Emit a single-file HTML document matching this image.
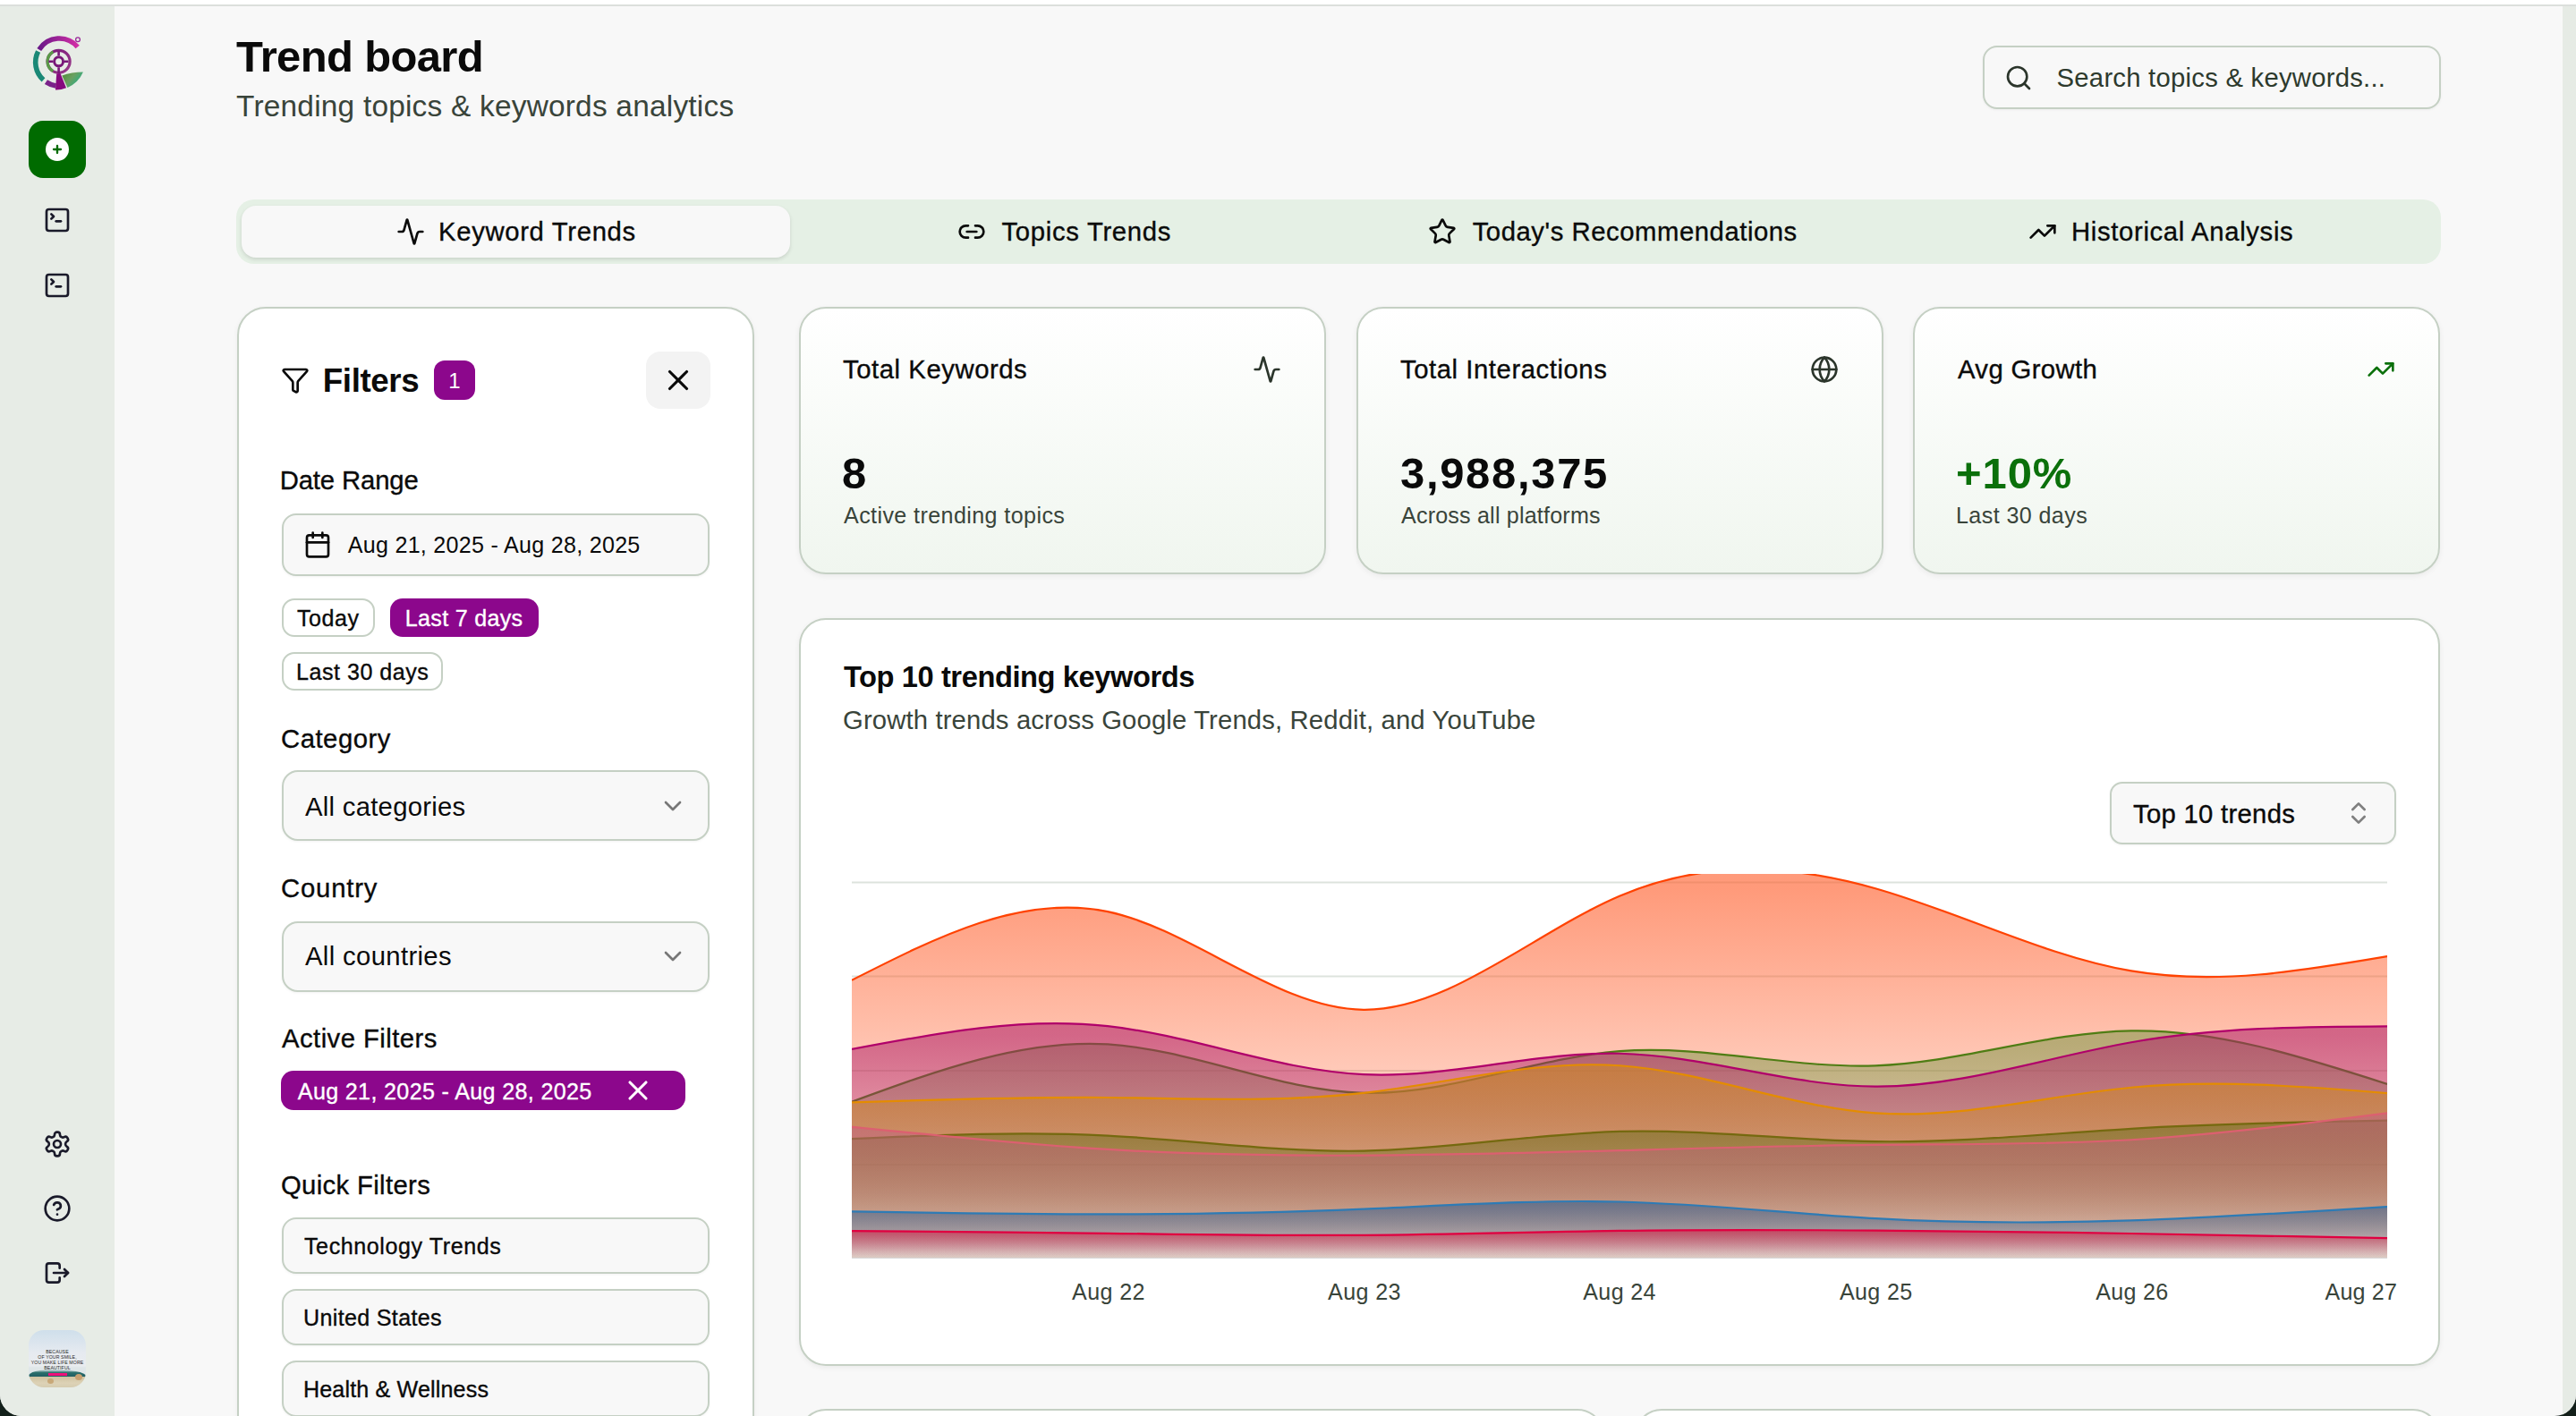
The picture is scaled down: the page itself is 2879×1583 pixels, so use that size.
<!DOCTYPE html>
<html><head><meta charset="utf-8">
<style>
*{box-sizing:border-box;margin:0;padding:0}
html,body{width:2879px;height:1583px;overflow:hidden;background:#13201a;font-family:"Liberation Sans",sans-serif;color:#0a0a0a;position:relative}
.abs{position:absolute}
.t{position:absolute;white-space:nowrap;line-height:1}
svg{position:absolute;overflow:visible}
.ic{fill:none;stroke:currentColor;stroke-linecap:round;stroke-linejoin:round}
#top{position:absolute;left:0;top:0;width:2879px;height:5px;background:#fff}
#topline{position:absolute;left:0;top:5px;width:2879px;height:2px;background:#dcdfdc}
#app{position:absolute;left:0;top:7px;width:2879px;height:1576px;background:#f8f8f8;border-radius:0 0 24px 24px;overflow:hidden}
#side{position:absolute;left:0;top:0;width:128px;height:1576px;background:#e7ece6}
#rstrip{position:absolute;left:2864px;top:0;width:15px;height:1576px;background:#e6ebe5}
</style></head><body>
<div id="top"></div><div id="topline"></div>
<div id="app"><div id="side"></div><div id="rstrip"></div></div>
<svg style="left:30px;top:35px" width="70" height="73" viewBox="30 35 70 73">
<defs>
<linearGradient id="lg1" x1="0" y1="0" x2="1" y2="0"><stop offset="0" stop-color="#6a1888"/><stop offset="1" stop-color="#d22ea6"/></linearGradient>
<linearGradient id="lg2" x1="0" y1="0" x2="1" y2="0.6"><stop offset="0" stop-color="#4e8a34"/><stop offset="0.5" stop-color="#6aa060"/><stop offset="1" stop-color="#22b08a"/></linearGradient>
<linearGradient id="lg3" x1="0" y1="0" x2="1" y2="1"><stop offset="0" stop-color="#781878"/><stop offset="1" stop-color="#9a3a8a"/></linearGradient>
</defs>
<path d="M86.68,52.50A26.6,26.6 0 0 0 43.74,55.50" fill="none" stroke="url(#lg1)" stroke-width="5.6"/>
<path d="M42.60,57.52A26.6,26.6 0 0 0 48.50,89.37" fill="none" stroke="#1a8876" stroke-width="5.6"/>
<path d="M51.43,91.65A26.6,26.6 0 0 0 62.60,95.94" fill="none" stroke="#7a228a" stroke-width="5.6"/>
<circle cx="87" cy="44.3" r="2.4" fill="none" stroke="#9a2a9a" stroke-width="1.3"/>
<circle cx="65.6" cy="68.8" r="12.5" fill="none" stroke="url(#lg3)" stroke-width="3.2"/>
<path d="M59.35,57.97A12.5,12.5 0 0 0 59.35,79.63" fill="none" stroke="#5a9a48" stroke-width="3.2"/>
<circle cx="65.6" cy="68.8" r="5" fill="none" stroke="#781878" stroke-width="3"/>
<path d="M65.6,57.5V62.3M65.6,75.3V82M54.5,68.8H59.3M71.9,68.8H76.5" stroke="#781878" stroke-width="2.6"/>
<path d="M63.2,82.5L67.5,82L74,98.2Q68,100.8 62,100.6Z" fill="#860a7e"/>
<path d="M69.3,84.6Q80,80.4 92.9,80.4Q88,92 75.4,98Z" fill="url(#lg2)"/>
</svg>
<div class="abs" style="left:32px;top:135px;width:64px;height:64px;border-radius:16px;background:#006b00"></div>
<div class="abs" style="left:51px;top:154px;width:26px;height:26px;border-radius:50%;background:#fff"></div>
<svg class="ic" style="left:56px;top:159px;color:#006b00;" width="16" height="16" viewBox="0 0 24 24" stroke-width="3.5"><path d="M12 6v12M6 12h12"/></svg>
<svg class="ic" style="left:48px;top:230px;color:#1a1a2a;" width="32" height="32" viewBox="0 0 24 24" stroke-width="2"><path d="m7 11 2-2-2-2"/><path d="M11 13h4"/><rect width="18" height="18" x="3" y="3" rx="2" ry="2"/></svg>
<svg class="ic" style="left:48px;top:303px;color:#1a1a2a;" width="32" height="32" viewBox="0 0 24 24" stroke-width="2"><path d="m7 11 2-2-2-2"/><path d="M11 13h4"/><rect width="18" height="18" x="3" y="3" rx="2" ry="2"/></svg>
<svg class="ic" style="left:48px;top:1263px;color:#1a1a2a;" width="32" height="32" viewBox="0 0 24 24" stroke-width="2"><path d="M12.22 2h-.44a2 2 0 0 0-2 2v.18a2 2 0 0 1-1 1.73l-.43.25a2 2 0 0 1-2 0l-.15-.08a2 2 0 0 0-2.73.73l-.22.38a2 2 0 0 0 .73 2.73l.15.1a2 2 0 0 1 1 1.72v.51a2 2 0 0 1-1 1.74l-.15.09a2 2 0 0 0-.73 2.73l.22.38a2 2 0 0 0 2.73.73l.15-.08a2 2 0 0 1 2 0l.43.25a2 2 0 0 1 1 1.73V20a2 2 0 0 0 2 2h.44a2 2 0 0 0 2-2v-.18a2 2 0 0 1 1-1.73l.43-.25a2 2 0 0 1 2 0l.15.08a2 2 0 0 0 2.73-.73l.22-.39a2 2 0 0 0-.73-2.73l-.15-.08a2 2 0 0 1-1-1.74v-.5a2 2 0 0 1 1-1.74l.15-.09a2 2 0 0 0 .73-2.73l-.22-.38a2 2 0 0 0-2.73-.73l-.15.08a2 2 0 0 1-2 0l-.43-.25a2 2 0 0 1-1-1.73V4a2 2 0 0 0-2-2z"/><circle cx="12" cy="12" r="3"/></svg>
<svg class="ic" style="left:48px;top:1335px;color:#1a1a2a;" width="32" height="32" viewBox="0 0 24 24" stroke-width="2"><circle cx="12" cy="12" r="10"/><path d="M9.09 9a3 3 0 0 1 5.83 1c0 2-3 3-3 3"/><path d="M12 17h.01"/></svg>
<svg class="ic" style="left:48px;top:1407px;color:#1a1a2a;" width="32" height="32" viewBox="0 0 24 24" stroke-width="2"><path d="M14 8v-2a2 2 0 0 0-2-2h-7a2 2 0 0 0-2 2v12a2 2 0 0 0 2 2h7a2 2 0 0 0 2-2v-2"/><path d="M9 12h12l-3-3"/><path d="M18 15l3-3"/></svg>
<div class="abs" style="left:32px;top:1487px;width:64px;height:64px;border-radius:17px;overflow:hidden;background:linear-gradient(180deg,#cfdfeb 0%,#e6eaf0 40%,#e9ecef 62%,#dfe6e8 66%)"><div class="t" style="left:0;width:64px;top:20.5px;font-size:5.2px;line-height:6px;text-align:center;color:#2a2a2a;letter-spacing:0.1px;white-space:normal">BECAUSE<br>OF YOUR SMILE,<br>YOU MAKE LIFE MORE<br>BEAUTIFUL</div><div class="abs" style="left:0;top:44px;width:64px;height:9px;background:linear-gradient(180deg,rgba(40,110,110,0) 0%,#2a6e6a 40%,#1f5a62 100%);border-radius:40% 60% 0 0/80% 80% 0 0"></div><div class="abs" style="left:0;top:52px;width:64px;height:12px;background:linear-gradient(180deg,#cfc2a0 0%,#ddd2b6 60%,#d6ccb0 100%)"></div><div class="abs" style="left:21px;top:54px;width:7px;height:6px;border-radius:50%;background:#c8a878"></div><div class="abs" style="left:52px;top:49px;width:8px;height:7px;border-radius:50%;background:#c8a070"></div><div class="abs" style="left:22px;top:47.5px;width:21px;height:3.5px;background:#f0107a"></div></div>
<div class="abs" style="left:2216px;top:51px;width:512px;height:71px;border:2px solid #c5d0c4;border-radius:16px;background:#f8f8f8;box-shadow:0 1px 3px rgba(0,0,0,.05)"></div>
<svg class="ic" style="left:2240px;top:71px;color:#2b352b;" width="32" height="32" viewBox="0 0 24 24" stroke-width="2"><circle cx="11" cy="11" r="8"/><path d="m21 21-4.3-4.3"/></svg>
<div class="abs" style="left:264px;top:223px;width:2464px;height:72px;border-radius:20px;background:#e5f0e5"></div>
<div class="abs" style="left:270px;top:230px;width:613px;height:58px;border-radius:16px;background:#f8f8f8;box-shadow:0 2px 4px rgba(0,0,0,.12)"></div>
<svg class="ic" style="left:443px;top:243px;color:#0a0a0a;" width="32" height="32" viewBox="0 0 24 24" stroke-width="2"><path d="M22 12h-2.48a2 2 0 0 0-1.93 1.46l-2.35 8.36a.25.25 0 0 1-.48 0L9.24 2.18a.25.25 0 0 0-.48 0l-2.35 8.36A2 2 0 0 1 4.49 12H2"/></svg>
<svg class="ic" style="left:1070px;top:243px;color:#0a0a0a;" width="32" height="32" viewBox="0 0 24 24" stroke-width="2"><path d="M9 17H7A5 5 0 0 1 7 7h2"/><path d="M15 7h2a5 5 0 1 1 0 10h-2"/><line x1="8" x2="16" y1="12" y2="12"/></svg>
<svg class="ic" style="left:1596px;top:243px;color:#0a0a0a;" width="32" height="32" viewBox="0 0 24 24" stroke-width="2"><path d="M11.525 2.295a.53.53 0 0 1 .95 0l2.31 4.679a2.123 2.123 0 0 0 1.595 1.16l5.166.756a.53.53 0 0 1 .294.904l-3.736 3.638a2.123 2.123 0 0 0-.611 1.878l.882 5.14a.53.53 0 0 1-.771.56l-4.618-2.428a2.122 2.122 0 0 0-1.973 0L6.396 21.01a.53.53 0 0 1-.77-.56l.881-5.139a2.122 2.122 0 0 0-.611-1.879L2.16 9.795a.53.53 0 0 1 .294-.906l5.165-.755a2.122 2.122 0 0 0 1.597-1.16z"/></svg>
<svg class="ic" style="left:2267px;top:243px;color:#0a0a0a;" width="32" height="32" viewBox="0 0 24 24" stroke-width="2"><polyline points="22 7 13.5 15.5 8.5 10.5 2 17"/><polyline points="16 7 22 7 22 13"/></svg>
<div class="abs" style="left:265px;top:343px;width:578px;height:1300px;background:#fff;border:2px solid #c5d0c4;border-radius:32px;box-shadow:0 2px 6px rgba(0,0,0,.05)"></div>
<svg class="ic" style="left:314px;top:409px;color:#0a0a0a;" width="32" height="32" viewBox="0 0 24 24" stroke-width="2"><path d="M10 20a1 1 0 0 0 .553.895l2 1A1 1 0 0 0 14 21v-7a2 2 0 0 1 .517-1.341L21.74 4.67A1 1 0 0 0 21 3H3a1 1 0 0 0-.742 1.67l7.225 7.989A2 2 0 0 1 10 14z"/></svg>
<div class="abs" style="left:485px;top:403px;width:46px;height:44px;border-radius:12px;background:#8c078c"></div>
<div class="t" style="left:508px;top:413.68px;font-size:24px;font-weight:400;color:#fff;letter-spacing:0px;transform:translateX(-50%);">1</div>
<div class="abs" style="left:722px;top:393px;width:72px;height:64px;border-radius:16px;background:#f3f3f3"></div>
<svg class="ic" style="left:738.8px;top:405.5px;color:#0a0a0a;" width="38" height="38" viewBox="0 0 24 24" stroke-width="2"><path d="M18 6 6 18"/><path d="m6 6 12 12"/></svg>
<div class="abs" style="left:315px;top:574px;width:478px;height:70px;border:2px solid #c5d0c4;border-radius:16px;background:#f8f8f8;box-shadow:0 1px 3px rgba(0,0,0,.05)"></div>
<svg class="ic" style="left:339px;top:593px;color:#0a0a0a;" width="32" height="32" viewBox="0 0 24 24" stroke-width="2"><path d="M8 2v4"/><path d="M16 2v4"/><rect width="18" height="18" x="3" y="4" rx="2"/><path d="M3 10h18"/></svg>
<div class="abs" style="left:315px;top:669px;width:104px;height:43px;border:2px solid #c5d0c4;border-radius:14px;background:#fff"></div>
<div class="abs" style="left:436px;top:669px;width:166px;height:43px;border-radius:14px;background:#8c078c"></div>
<div class="abs" style="left:315px;top:729px;width:180px;height:43px;border:2px solid #c5d0c4;border-radius:14px;background:#fff"></div>
<div class="abs" style="left:315px;top:861px;width:478px;height:79px;border:2px solid #c5d0c4;border-radius:18px;background:#f8f8f8;box-shadow:0 1px 3px rgba(0,0,0,.05)"></div>
<svg class="ic" style="left:736px;top:885px;color:#777;" width="32" height="32" viewBox="0 0 24 24" stroke-width="2"><path d="m6 9 6 6 6-6"/></svg>
<div class="abs" style="left:315px;top:1030px;width:478px;height:79px;border:2px solid #c5d0c4;border-radius:18px;background:#f8f8f8;box-shadow:0 1px 3px rgba(0,0,0,.05)"></div>
<svg class="ic" style="left:736px;top:1053px;color:#777;" width="32" height="32" viewBox="0 0 24 24" stroke-width="2"><path d="m6 9 6 6 6-6"/></svg>
<div class="abs" style="left:314px;top:1197px;width:452px;height:44px;border-radius:14px;background:#8c078c"></div>
<svg class="ic" style="left:695.3px;top:1200.8px;color:#fff;" width="36" height="36" viewBox="0 0 24 24" stroke-width="2.1"><path d="M18 6 6 18"/><path d="m6 6 12 12"/></svg>
<div class="abs" style="left:315px;top:1361px;width:478px;height:63px;border:2px solid #c5d0c4;border-radius:16px;background:#f8f8f8;box-shadow:0 1px 3px rgba(0,0,0,.05)"></div>
<div class="abs" style="left:315px;top:1441px;width:478px;height:63px;border:2px solid #c5d0c4;border-radius:16px;background:#f8f8f8;box-shadow:0 1px 3px rgba(0,0,0,.05)"></div>
<div class="abs" style="left:315px;top:1521px;width:478px;height:63px;border:2px solid #c5d0c4;border-radius:16px;background:#f8f8f8;box-shadow:0 1px 3px rgba(0,0,0,.05)"></div>
<div class="abs" style="left:893px;top:343px;width:589px;height:299px;border:2px solid #c5d0c4;border-radius:30px;background:linear-gradient(180deg,#ffffff 0%,#f0f6ef 100%);box-shadow:0 2px 6px rgba(0,0,0,.06)"></div>
<svg class="ic" style="left:1400px;top:397px;color:#2b352b;" width="32" height="32" viewBox="0 0 24 24" stroke-width="2"><path d="M22 12h-2.48a2 2 0 0 0-1.93 1.46l-2.35 8.36a.25.25 0 0 1-.48 0L9.24 2.18a.25.25 0 0 0-.48 0l-2.35 8.36A2 2 0 0 1 4.49 12H2"/></svg>
<div class="abs" style="left:1516px;top:343px;width:589px;height:299px;border:2px solid #c5d0c4;border-radius:30px;background:linear-gradient(180deg,#ffffff 0%,#f0f6ef 100%);box-shadow:0 2px 6px rgba(0,0,0,.06)"></div>
<svg class="ic" style="left:2023px;top:397px;color:#2b352b;" width="32" height="32" viewBox="0 0 24 24" stroke-width="2"><circle cx="12" cy="12" r="10"/><path d="M12 2a14.5 14.5 0 0 0 0 20 14.5 14.5 0 0 0 0-20"/><path d="M2 12h20"/></svg>
<div class="abs" style="left:2138px;top:343px;width:589px;height:299px;border:2px solid #c5d0c4;border-radius:30px;background:linear-gradient(180deg,#ffffff 0%,#f0f6ef 100%);box-shadow:0 2px 6px rgba(0,0,0,.06)"></div>
<svg class="ic" style="left:2645px;top:397px;color:#0b700b;" width="32" height="32" viewBox="0 0 24 24" stroke-width="2"><polyline points="22 7 13.5 15.5 8.5 10.5 2 17"/><polyline points="16 7 22 7 22 13"/></svg>
<div class="abs" style="left:893px;top:691px;width:1834px;height:836px;border:2px solid #c5d0c4;border-radius:30px;background:#fff;box-shadow:0 2px 6px rgba(0,0,0,.06)"></div>
<div class="abs" style="left:2358px;top:873.5px;width:320px;height:70.5px;border:2px solid #c5d0c4;border-radius:14px;background:#f8f8f8;box-shadow:0 1px 3px rgba(0,0,0,.05)"></div>
<svg class="ic" style="left:2620px;top:893px;color:#7f7f7f;" width="32" height="32" viewBox="0 0 24 24" stroke-width="2"><path d="m7 15 5 5 5-5"/><path d="m7 9 5-5 5 5"/></svg>
<svg style="left:0;top:0;position:absolute" width="2879" height="1583" viewBox="0 0 2879 1583">
<defs><clipPath id="cc"><rect x="952" y="977" width="1716" height="430"/></clipPath>
<linearGradient id="g0" x1="0" y1="0" x2="0" y2="1"><stop offset="0.05" stop-color="#ff5722" stop-opacity="0.6"/><stop offset="0.95" stop-color="#ff5722" stop-opacity="0.06"/></linearGradient>
<linearGradient id="g1" x1="0" y1="0" x2="0" y2="1"><stop offset="0.05" stop-color="#80984a" stop-opacity="0.56"/><stop offset="0.95" stop-color="#80984a" stop-opacity="0.06"/></linearGradient>
<linearGradient id="g2" x1="0" y1="0" x2="0" y2="1"><stop offset="0.05" stop-color="#b0206a" stop-opacity="0.56"/><stop offset="0.95" stop-color="#b0206a" stop-opacity="0.06"/></linearGradient>
<linearGradient id="g3" x1="0" y1="0" x2="0" y2="1"><stop offset="0.05" stop-color="#d08a20" stop-opacity="0.56"/><stop offset="0.95" stop-color="#d08a20" stop-opacity="0.06"/></linearGradient>
<linearGradient id="g4" x1="0" y1="0" x2="0" y2="1"><stop offset="0.05" stop-color="#6f7020" stop-opacity="0.56"/><stop offset="0.95" stop-color="#6f7020" stop-opacity="0.06"/></linearGradient>
<linearGradient id="g5" x1="0" y1="0" x2="0" y2="1"><stop offset="0.05" stop-color="#c06080" stop-opacity="0.56"/><stop offset="0.95" stop-color="#c06080" stop-opacity="0.06"/></linearGradient>
<linearGradient id="g6" x1="0" y1="0" x2="0" y2="1"><stop offset="0.05" stop-color="#2a5a90" stop-opacity="0.56"/><stop offset="0.95" stop-color="#2a5a90" stop-opacity="0.06"/></linearGradient>
<linearGradient id="g7" x1="0" y1="0" x2="0" y2="1"><stop offset="0.05" stop-color="#dc143c" stop-opacity="0.56"/><stop offset="0.95" stop-color="#dc143c" stop-opacity="0.0"/></linearGradient>
</defs>
<line x1="952" x2="2668" y1="986.5" y2="986.5" stroke="#dde3dd" stroke-width="2"/>
<line x1="952" x2="2668" y1="1091.5" y2="1091.5" stroke="#dde3dd" stroke-width="2"/>
<line x1="952" x2="2668" y1="1197" y2="1197" stroke="#dde3dd" stroke-width="2"/>
<line x1="952" x2="2668" y1="1302" y2="1302" stroke="#dde3dd" stroke-width="2"/>
<g clip-path="url(#cc)">
<path d="M952.0,1095.82C1047.33,1047.39 1142.67,998.96 1238.00,1019.10C1333.33,1039.24 1428.67,1127.96 1524.00,1128.81C1619.33,1129.66 1714.67,1042.64 1810.00,1001.76C1905.33,960.88 2000.67,966.15 2096.00,993.22C2191.33,1020.29 2286.67,1069.15 2382.00,1085.43C2477.33,1101.71 2572.67,1085.39 2668.00,1069.08L2668,1407L952,1407Z" fill="url(#g0)"/>
<path d="M952.0,1095.82C1047.33,1047.39 1142.67,998.96 1238.00,1019.10C1333.33,1039.24 1428.67,1127.96 1524.00,1128.81C1619.33,1129.66 1714.67,1042.64 1810.00,1001.76C1905.33,960.88 2000.67,966.15 2096.00,993.22C2191.33,1020.29 2286.67,1069.15 2382.00,1085.43C2477.33,1101.71 2572.67,1085.39 2668.00,1069.08" fill="none" stroke="#ff4200" stroke-width="2.2"/>
<path d="M952.0,1231.69C1047.33,1196.72 1142.67,1161.75 1238.00,1167.45C1333.33,1173.15 1428.67,1219.52 1524.00,1221.87C1619.33,1224.22 1714.67,1182.55 1810.00,1175.18C1905.33,1167.81 2000.67,1194.73 2096.00,1191.28C2191.33,1187.83 2286.67,1154.00 2382.00,1152.36C2477.33,1150.72 2572.67,1181.28 2668.00,1211.84L2668,1407L952,1407Z" fill="url(#g1)"/>
<path d="M952.0,1231.69C1047.33,1196.72 1142.67,1161.75 1238.00,1167.45C1333.33,1173.15 1428.67,1219.52 1524.00,1221.87C1619.33,1224.22 1714.67,1182.55 1810.00,1175.18C1905.33,1167.81 2000.67,1194.73 2096.00,1191.28C2191.33,1187.83 2286.67,1154.00 2382.00,1152.36C2477.33,1150.72 2572.67,1181.28 2668.00,1211.84" fill="none" stroke="#4f7d14" stroke-width="2.2"/>
<path d="M952.0,1172.99C1047.33,1154.86 1142.67,1136.73 1238.00,1147.17C1333.33,1157.61 1428.67,1196.62 1524.00,1201.13C1619.33,1205.64 1714.67,1175.64 1810.00,1177.77C1905.33,1179.90 2000.67,1214.14 2096.00,1214.69C2191.33,1215.24 2286.67,1182.09 2382.00,1165.26C2477.33,1148.43 2572.67,1147.91 2668.00,1147.39L2668,1407L952,1407Z" fill="url(#g2)"/>
<path d="M952.0,1172.99C1047.33,1154.86 1142.67,1136.73 1238.00,1147.17C1333.33,1157.61 1428.67,1196.62 1524.00,1201.13C1619.33,1205.64 1714.67,1175.64 1810.00,1177.77C1905.33,1179.90 2000.67,1214.14 2096.00,1214.69C2191.33,1215.24 2286.67,1182.09 2382.00,1165.26C2477.33,1148.43 2572.67,1147.91 2668.00,1147.39" fill="none" stroke="#b0006a" stroke-width="2.2"/>
<path d="M952.0,1232.37C1047.33,1229.25 1142.67,1226.13 1238.00,1226.98C1333.33,1227.83 1428.67,1232.64 1524.00,1221.84C1619.33,1211.04 1714.67,1184.62 1810.00,1191.26C1905.33,1197.90 2000.67,1237.62 2096.00,1244.38C2191.33,1251.14 2286.67,1224.96 2382.00,1215.77C2477.33,1206.58 2572.67,1214.38 2668.00,1222.18L2668,1407L952,1407Z" fill="url(#g3)"/>
<path d="M952.0,1232.37C1047.33,1229.25 1142.67,1226.13 1238.00,1226.98C1333.33,1227.83 1428.67,1232.64 1524.00,1221.84C1619.33,1211.04 1714.67,1184.62 1810.00,1191.26C1905.33,1197.90 2000.67,1237.62 2096.00,1244.38C2191.33,1251.14 2286.67,1224.96 2382.00,1215.77C2477.33,1206.58 2572.67,1214.38 2668.00,1222.18" fill="none" stroke="#e48c00" stroke-width="2.2"/>
<path d="M952.0,1273.14C1047.33,1268.91 1142.67,1264.69 1238.00,1269.55C1333.33,1274.41 1428.67,1288.36 1524.00,1286.62C1619.33,1284.88 1714.67,1267.46 1810.00,1264.95C1905.33,1262.44 2000.67,1274.84 2096.00,1276.12C2191.33,1277.40 2286.67,1267.57 2382.00,1261.80C2477.33,1256.03 2572.67,1254.33 2668.00,1252.63L2668,1407L952,1407Z" fill="url(#g4)"/>
<path d="M952.0,1273.14C1047.33,1268.91 1142.67,1264.69 1238.00,1269.55C1333.33,1274.41 1428.67,1288.36 1524.00,1286.62C1619.33,1284.88 1714.67,1267.46 1810.00,1264.95C1905.33,1262.44 2000.67,1274.84 2096.00,1276.12C2191.33,1277.40 2286.67,1267.57 2382.00,1261.80C2477.33,1256.03 2572.67,1254.33 2668.00,1252.63" fill="none" stroke="#75690f" stroke-width="2.2"/>
<path d="M952.0,1259.75C1047.33,1269.53 1142.67,1279.32 1238.00,1284.97C1333.33,1290.62 1428.67,1292.15 1524.00,1291.69C1619.33,1291.23 1714.67,1288.78 1810.00,1286.17C1905.33,1283.56 2000.67,1280.80 2096.00,1279.88C2191.33,1278.96 2286.67,1279.87 2382.00,1274.24C2477.33,1268.61 2572.67,1256.45 2668.00,1244.29L2668,1407L952,1407Z" fill="url(#g5)"/>
<path d="M952.0,1259.75C1047.33,1269.53 1142.67,1279.32 1238.00,1284.97C1333.33,1290.62 1428.67,1292.15 1524.00,1291.69C1619.33,1291.23 1714.67,1288.78 1810.00,1286.17C1905.33,1283.56 2000.67,1280.80 2096.00,1279.88C2191.33,1278.96 2286.67,1279.87 2382.00,1274.24C2477.33,1268.61 2572.67,1256.45 2668.00,1244.29" fill="none" stroke="#dc6070" stroke-width="2.2"/>
<path d="M952.0,1354.42C1047.33,1355.98 1142.67,1357.54 1238.00,1357.47C1333.33,1357.40 1428.67,1355.71 1524.00,1351.66C1619.33,1347.61 1714.67,1341.21 1810.00,1343.49C1905.33,1345.77 2000.67,1356.75 2096.00,1362.19C2191.33,1367.63 2286.67,1367.53 2382.00,1364.41C2477.33,1361.29 2572.67,1355.13 2668.00,1348.98L2668,1407L952,1407Z" fill="url(#g6)"/>
<path d="M952.0,1354.42C1047.33,1355.98 1142.67,1357.54 1238.00,1357.47C1333.33,1357.40 1428.67,1355.71 1524.00,1351.66C1619.33,1347.61 1714.67,1341.21 1810.00,1343.49C1905.33,1345.77 2000.67,1356.75 2096.00,1362.19C2191.33,1367.63 2286.67,1367.53 2382.00,1364.41C2477.33,1361.29 2572.67,1355.13 2668.00,1348.98" fill="none" stroke="#2e7bb5" stroke-width="2.2"/>
<path d="M952.0,1376.10C1047.33,1376.87 1142.67,1377.64 1238.00,1378.80C1333.33,1379.96 1428.67,1381.52 1524.00,1380.83C1619.33,1380.14 1714.67,1377.19 1810.00,1375.88C1905.33,1374.57 2000.67,1374.90 2096.00,1375.63C2191.33,1376.36 2286.67,1377.49 2382.00,1378.98C2477.33,1380.47 2572.67,1382.32 2668.00,1384.17L2668,1407L952,1407Z" fill="url(#g7)"/>
<path d="M952.0,1376.10C1047.33,1376.87 1142.67,1377.64 1238.00,1378.80C1333.33,1379.96 1428.67,1381.52 1524.00,1380.83C1619.33,1380.14 1714.67,1377.19 1810.00,1375.88C1905.33,1374.57 2000.67,1374.90 2096.00,1375.63C2191.33,1376.36 2286.67,1377.49 2382.00,1378.98C2477.33,1380.47 2572.67,1382.32 2668.00,1384.17" fill="none" stroke="#e00040" stroke-width="2.2"/>
</g>
<line x1="952" x2="2668" y1="1406.5" y2="1406.5" stroke="#d8d8d8" stroke-width="1"/>
</svg>
<div class="abs" style="left:893px;top:1575px;width:900px;height:200px;border:2px solid #c5d0c4;border-radius:30px;background:#fff"></div>
<div class="abs" style="left:1827px;top:1575px;width:900px;height:200px;border:2px solid #c5d0c4;border-radius:30px;background:#fff"></div>
<div class="t" style="left:264.1px;top:39.23px;font-size:48.96px;font-weight:700;color:#0a0a0a;letter-spacing:-0.64px;">Trend board</div>
<div class="t" style="left:264px;top:102.04px;font-size:33.44px;font-weight:400;color:#39443a;letter-spacing:0.214px;">Trending topics &amp; keywords analytics</div>
<div class="t" style="left:2298.6px;top:72.88px;font-size:29.26px;font-weight:400;color:#2d3a2d;letter-spacing:0.246px;">Search topics &amp; keywords...</div>
<div class="t" style="left:490px;top:245.08px;font-size:29.26px;font-weight:500;color:#0a0a0a;letter-spacing:0.677px;-webkit-text-stroke:0.35px #0a0a0a;">Keyword Trends</div>
<div class="t" style="left:1119.4px;top:245.08px;font-size:29.26px;font-weight:500;color:#0a0a0a;letter-spacing:0.717px;-webkit-text-stroke:0.35px #0a0a0a;">Topics Trends</div>
<div class="t" style="left:1645.7px;top:245.08px;font-size:29.26px;font-weight:500;color:#0a0a0a;letter-spacing:0.559px;-webkit-text-stroke:0.35px #0a0a0a;">Today&#x27;s Recommendations</div>
<div class="t" style="left:2315px;top:245.08px;font-size:29.26px;font-weight:500;color:#0a0a0a;letter-spacing:0.667px;-webkit-text-stroke:0.35px #0a0a0a;">Historical Analysis</div>
<div class="t" style="left:360.8px;top:408.27px;font-size:36.72px;font-weight:700;color:#0a0a0a;letter-spacing:-0.4px;">Filters</div>
<div class="t" style="left:312.7px;top:523.48px;font-size:29.26px;font-weight:500;color:#0a0a0a;letter-spacing:-0.111px;-webkit-text-stroke:0.35px #0a0a0a;">Date Range</div>
<div class="t" style="left:388.7px;top:596.61px;font-size:25.08px;font-weight:400;color:#0a0a0a;letter-spacing:0.281px;">Aug 21, 2025 - Aug 28, 2025</div>
<div class="t" style="left:332px;top:678.61px;font-size:25.08px;font-weight:500;color:#0a0a0a;letter-spacing:0.5px;-webkit-text-stroke:0.35px #0a0a0a;">Today</div>
<div class="t" style="left:452.8px;top:678.61px;font-size:25.08px;font-weight:500;color:#ffffff;letter-spacing:0.31px;-webkit-text-stroke:0.35px #ffffff;">Last 7 days</div>
<div class="t" style="left:331px;top:738.61px;font-size:25.08px;font-weight:500;color:#0a0a0a;letter-spacing:0.518px;-webkit-text-stroke:0.35px #0a0a0a;">Last 30 days</div>
<div class="t" style="left:314px;top:811.58px;font-size:29.26px;font-weight:500;color:#0a0a0a;letter-spacing:0.529px;-webkit-text-stroke:0.35px #0a0a0a;">Category</div>
<div class="t" style="left:341px;top:887.88px;font-size:29.26px;font-weight:400;color:#0a0a0a;letter-spacing:0.277px;">All categories</div>
<div class="t" style="left:314px;top:979.08px;font-size:29.26px;font-weight:500;color:#0a0a0a;letter-spacing:0.833px;-webkit-text-stroke:0.35px #0a0a0a;">Country</div>
<div class="t" style="left:341px;top:1055.08px;font-size:29.26px;font-weight:400;color:#0a0a0a;letter-spacing:0.358px;">All countries</div>
<div class="t" style="left:315px;top:1146.68px;font-size:29.26px;font-weight:500;color:#0a0a0a;letter-spacing:0.462px;-webkit-text-stroke:0.35px #0a0a0a;">Active Filters</div>
<div class="t" style="left:332.8px;top:1207.61px;font-size:25.08px;font-weight:500;color:#ffffff;letter-spacing:0.354px;-webkit-text-stroke:0.35px #ffffff;">Aug 21, 2025 - Aug 28, 2025</div>
<div class="t" style="left:314px;top:1311.48px;font-size:29.26px;font-weight:500;color:#0a0a0a;letter-spacing:0.358px;-webkit-text-stroke:0.35px #0a0a0a;">Quick Filters</div>
<div class="t" style="left:340px;top:1380.61px;font-size:25.08px;font-weight:500;color:#0a0a0a;letter-spacing:0.581px;-webkit-text-stroke:0.35px #0a0a0a;">Technology Trends</div>
<div class="t" style="left:339px;top:1460.61px;font-size:25.08px;font-weight:500;color:#0a0a0a;letter-spacing:0.333px;-webkit-text-stroke:0.35px #0a0a0a;">United States</div>
<div class="t" style="left:339px;top:1540.61px;font-size:25.08px;font-weight:500;color:#0a0a0a;letter-spacing:0.156px;-webkit-text-stroke:0.35px #0a0a0a;">Health &amp; Wellness</div>
<div class="t" style="left:942px;top:399.08px;font-size:29.26px;font-weight:500;color:#0a0a0a;letter-spacing:0.569px;-webkit-text-stroke:0.35px #0a0a0a;">Total Keywords</div>
<div class="t" style="left:941px;top:505.43px;font-size:48.96px;font-weight:700;color:#0a0a0a;letter-spacing:0.0px;">8</div>
<div class="t" style="left:943px;top:564.21px;font-size:25.08px;font-weight:400;color:#39443a;letter-spacing:0.405px;">Active trending topics</div>
<div class="t" style="left:1565px;top:399.08px;font-size:29.26px;font-weight:500;color:#0a0a0a;letter-spacing:0.571px;-webkit-text-stroke:0.35px #0a0a0a;">Total Interactions</div>
<div class="t" style="left:1565px;top:505.43px;font-size:48.96px;font-weight:700;color:#0a0a0a;letter-spacing:1.688px;">3,988,375</div>
<div class="t" style="left:1566px;top:564.21px;font-size:25.08px;font-weight:400;color:#39443a;letter-spacing:0.195px;">Across all platforms</div>
<div class="t" style="left:2188px;top:399.08px;font-size:29.26px;font-weight:500;color:#0a0a0a;letter-spacing:0.389px;-webkit-text-stroke:0.35px #0a0a0a;">Avg Growth</div>
<div class="t" style="left:2186px;top:505.43px;font-size:48.96px;font-weight:700;color:#0b700b;letter-spacing:0.933px;">+10%</div>
<div class="t" style="left:2186px;top:564.21px;font-size:25.08px;font-weight:400;color:#39443a;letter-spacing:0.409px;">Last 30 days</div>
<div class="t" style="left:943px;top:741.22px;font-size:32.64px;font-weight:700;color:#0a0a0a;letter-spacing:-0.409px;">Top 10 trending keywords</div>
<div class="t" style="left:942px;top:791.08px;font-size:29.26px;font-weight:400;color:#39443a;letter-spacing:0.148px;">Growth trends across Google Trends, Reddit, and YouTube</div>
<div class="t" style="left:2384px;top:896.08px;font-size:29.26px;font-weight:500;color:#0a0a0a;letter-spacing:0.3px;-webkit-text-stroke:0.35px #0a0a0a;">Top 10 trends</div>
<div class="t" style="left:1198px;top:1431.61px;font-size:25.08px;font-weight:400;color:#39443a;letter-spacing:0.4px;">Aug 22</div>
<div class="t" style="left:1484px;top:1431.61px;font-size:25.08px;font-weight:400;color:#39443a;letter-spacing:0.4px;">Aug 23</div>
<div class="t" style="left:1769.3px;top:1431.61px;font-size:25.08px;font-weight:400;color:#39443a;letter-spacing:0.34px;">Aug 24</div>
<div class="t" style="left:2056px;top:1431.61px;font-size:25.08px;font-weight:400;color:#39443a;letter-spacing:0.34px;">Aug 25</div>
<div class="t" style="left:2342.3px;top:1431.61px;font-size:25.08px;font-weight:400;color:#39443a;letter-spacing:0.28px;">Aug 26</div>
<div class="t" style="left:2598.5px;top:1431.61px;font-size:25.08px;font-weight:400;color:#39443a;letter-spacing:0.18px;">Aug 27</div>
</body></html>
